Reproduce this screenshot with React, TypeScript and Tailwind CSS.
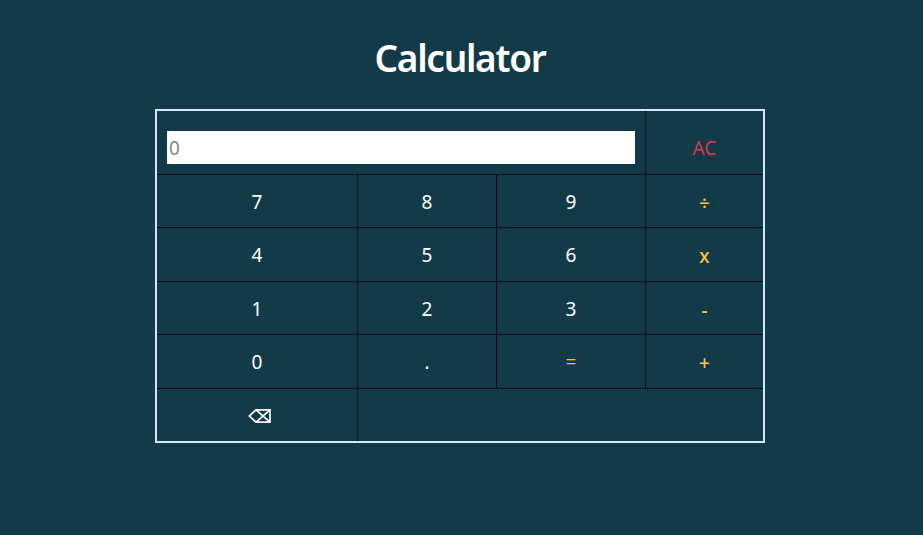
import { useState } from "react";

type Key = { label: string; tone: string; edge: string };

const num = "pt-px text-white";
const equals = "pt-px text-[#f0bd33]";
const op = "pt-[3px] font-medium text-[#ffc52e]";
const inner = "border-r border-b border-[#020710]";
const last = "border-b border-[#020710]";

const keys: Key[] = [
  { label: "7", tone: num, edge: inner },
  { label: "8", tone: num, edge: inner },
  { label: "9", tone: num, edge: inner },
  { label: "÷", tone: op, edge: last },
  { label: "4", tone: num, edge: inner },
  { label: "5", tone: num, edge: inner },
  { label: "6", tone: num, edge: inner },
  { label: "x", tone: op, edge: last },
  { label: "1", tone: num, edge: inner },
  { label: "2", tone: num, edge: inner },
  { label: "3", tone: num, edge: inner },
  { label: "-", tone: op, edge: last },
  { label: "0", tone: num, edge: inner },
  { label: ".", tone: num, edge: inner },
  { label: "=", tone: equals, edge: inner },
  { label: "+", tone: op, edge: last },
];

function evaluate(expression: string): string {
  const tokens = expression.match(/\d*\.?\d+|[÷x+-]/g) ?? [];
  const terms: number[] = [];
  let pending = "+";
  for (const token of tokens) {
    if (/^[÷x+-]$/.test(token)) {
      pending = token;
      continue;
    }
    const value = Number(token);
    if (pending === "+") terms.push(value);
    else if (pending === "-") terms.push(-value);
    else {
      const previous = terms.pop() ?? 0;
      terms.push(pending === "x" ? previous * value : previous / value);
    }
  }
  return String(terms.reduce((sum, term) => sum + term, 0));
}

export default function App() {
  const [value, setValue] = useState("");

  const press = (label: string) =>
    setValue((current) => (label === "=" ? evaluate(current) : current + label));

  return (
    <main className="flex min-h-screen flex-col items-center bg-[#133a48] pr-[3px] font-['Noto_Sans','Open_Sans',sans-serif] text-[19px] leading-7">
      <h1 className="mt-8 mb-[25px] text-[37px] leading-[52px] font-semibold tracking-[-1.3px] text-white">
        Calculator
      </h1>
      <div className="grid h-[334px] w-[610px] grid-cols-[201px_139px_149px_117px] grid-rows-[64px_53px_54px_53px_54px_52px] border-2 border-[#d3e7f2]">
        <div className="col-span-3 border-r border-b border-[#020710] px-2.5 pt-5">
          <input
            className="block h-[33px] w-full bg-white px-0.5 text-black outline-none placeholder:text-[#858585]"
            placeholder="0"
            value={value}
            readOnly
          />
        </div>
        <button
          className="border-b border-[#020710] pt-2.5 text-[#d2394f]"
          onClick={() => setValue("")}
        >
          AC
        </button>
        {keys.map(({ label, tone, edge }) => (
          <button key={label} className={`${edge} ${tone}`} onClick={() => press(label)}>
            {label}
          </button>
        ))}
        <button
          className="flex items-center justify-center border-r border-[#020710] pt-0.5 pl-1.5 text-white"
          aria-label="Backspace"
          onClick={() => setValue((current) => current.slice(0, -1))}
        >
          <svg
            className="h-4 w-6"
            viewBox="0 0 24 16"
            fill="none"
            stroke="currentColor"
            strokeWidth="1.7"
          >
            <path d="M8 1.8h14v12.4H8L1.4 8zM8 1.8l14 12.4M22 1.8L8 14.2" />
          </svg>
        </button>
        <div className="col-span-3" />
      </div>
    </main>
  );
}
